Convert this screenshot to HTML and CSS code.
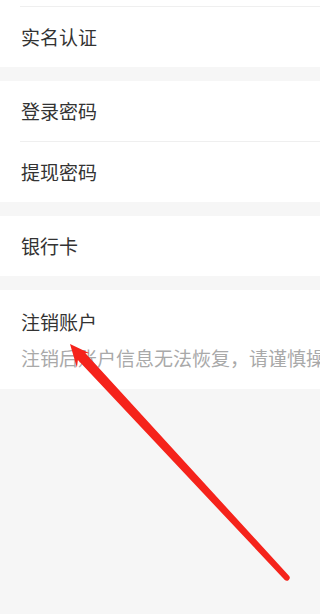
FILE: index.html
```html
<!DOCTYPE html>
<html lang="zh-CN">
<head>
<meta charset="utf-8">
<meta name="viewport" content="width=device-width, initial-scale=1">
<title>账户与安全</title>
<link rel="stylesheet" href="styles.css">
</head>
<body>
<main class="page">
  <section class="group">
    <div class="row-tail"></div>
    <div class="row"><span class="label">实名认证</span></div>
  </section>
  <section class="group">
    <div class="row"><span class="label">登录密码</span></div>
    <div class="row"><span class="label">提现密码</span></div>
  </section>
  <section class="group">
    <div class="row"><span class="label">银行卡</span></div>
  </section>
  <section class="group">
    <div class="row row-tall">
      <span class="label">注销账户</span>
      <span class="hint">注销后账户信息无法恢复，请谨慎操作</span>
    </div>
  </section>
  <svg class="annotation" width="320" height="614" viewBox="0 0 320 614" aria-hidden="true">
    <path d="M70 344 L89.5 353.2 L85.2 353.1 L289.2 576 A3 3 0 0 1 284.8 580 L77.9 359.9 L76.9 367.6 Z" fill="#f5231b"/>
  </svg>
</main>
</body>
</html>
```

FILE: styles.css
```css
html, body {
  margin: 0;
  padding: 0;
}

body {
  background: #f6f6f6;
  font-family: "Noto Sans CJK SC", "Noto Sans", sans-serif;
  color: #333333;
}

.page {
  position: relative;
  width: 320px;
  height: 614px;
  overflow: hidden;
  display: flex;
  flex-direction: column;
  gap: 14px;
}

.group {
  background: #ffffff;
  display: flex;
  flex-direction: column;
}

.row-tail {
  height: 6px;
}

.row {
  height: 60px;
  margin-left: 20px;
  padding-left: 1px;
  border-top: 1px solid #efefef;
  display: flex;
  align-items: center;
}

.group > .row:first-child {
  border-top: none;
  height: 60px;
}

.row-tail + .row {
  border-top: 1px solid #efefef;
}

.label {
  font-size: 19px;
  line-height: 28px;
  color: #333333;
  white-space: nowrap;
}

.row-tall {
  height: auto;
  flex-direction: column;
  align-items: flex-start;
  padding-top: 18px;
  padding-bottom: 17px;
  gap: 8px;
  overflow: hidden;
}

.group > .row-tall:first-child {
  height: auto;
}

.hint {
  font-size: 19px;
  line-height: 28px;
  color: #a9a9a9;
  white-space: nowrap;
}

.annotation {
  position: absolute;
  left: 0;
  top: 0;
}
```
